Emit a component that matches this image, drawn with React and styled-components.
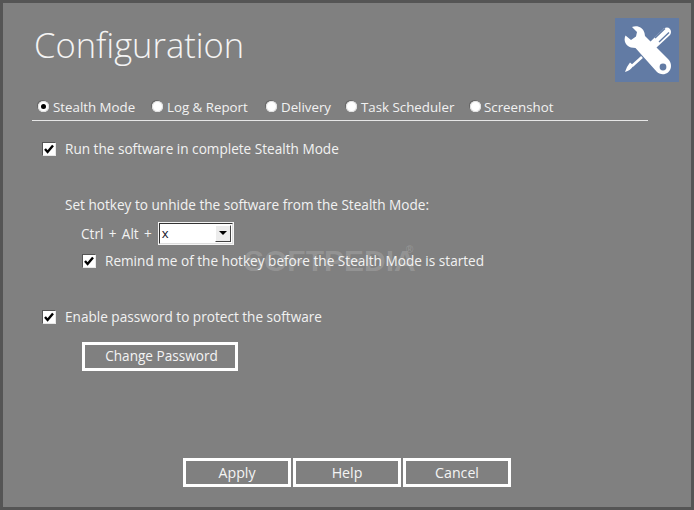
import React from "react";
import styled, { createGlobalStyle } from "styled-components";

const Global = createGlobalStyle`
  html, body { margin: 0; padding: 0; background: #808080; }
  * { box-sizing: border-box; }
`;

const Frame = styled.div`
  position: relative;
  width: 694px;
  height: 510px;
  background: #808080;
  border: 3px solid #555555;
  font-family: "Open Sans", "Noto Sans", sans-serif;
  font-size: 13.6px;
  color: #f2f2f2;
  overflow: hidden;
  display: flex;
  flex-direction: column;
`;

const Header = styled.header`
  display: flex;
  justify-content: space-between;
  align-items: flex-start;
  height: 88px;
  padding: 15px 12px 0 31px;
`;

const Title = styled.h1`
  margin: 3px 0 0;
  font-weight: 300;
  font-size: 34.5px;
  line-height: 48px;
  color: #f4f4f4;
`;

const IconBox = styled.div`
  width: 64px;
  height: 64px;
  background: #627ba4;
  display: flex;
`;

const Tabs = styled.nav`
  display: flex;
  align-items: center;
  height: 30px;
  margin: 0 43px 0 29px;
  padding: 2px 0 0 6px;
  border-bottom: 1px solid #e6e6e6;
  font-size: 13.3px;
`;

const Tab = styled.div`
  display: flex;
  align-items: center;
  width: ${(p) => p.$width}px;
  gap: ${(p) => p.$gap ?? 4}px;
  line-height: 18px;
  white-space: nowrap;
`;

const Radio = styled.span`
  flex: none;
  width: 11px;
  height: 11px;
  border-radius: 50%;
  background: #fff;
  box-shadow: inset 0 0 0 1px #e0e0e0, -1px -1px 0 #666;
  display: flex;
  align-items: center;
  justify-content: center;
  &::after {
    content: "";
    display: ${(p) => (p.$on ? "block" : "none")};
    width: 5px;
    height: 5px;
    border-radius: 50%;
    background: #000;
  }
`;

const Content = styled.main`
  flex: 1;
  display: flex;
  flex-direction: column;
  align-items: flex-start;
  padding: 0 0 0 39px;
`;

const CheckRow = styled.label`
  display: flex;
  align-items: center;
  gap: 10px;
  height: 18px;
  padding-bottom: 2px;
  margin: ${(p) => p.$margin};
  white-space: nowrap;
`;

const CheckBox = styled.span`
  flex: none;
  width: 13px;
  height: 13px;
  margin-top: 1px;
  background: #fff;
  border-top: 1px solid #555;
  border-left: 1px solid #555;
  box-shadow: 1px 1px 0 #e8e8e8;
  display: flex;
  align-items: center;
  justify-content: center;
`;

const Label = styled.div`
  margin: ${(p) => p.$margin};
  line-height: 18px;
  white-space: nowrap;
`;

const HotkeyRow = styled.div`
  display: flex;
  align-items: center;
  gap: 7px;
  height: 22px;
  margin: 8px 0 0 39px;
  word-spacing: 1.8px;
`;

const Select = styled.div`
  width: 74px;
  height: 21px;
  background: #fff;
  border-top: 1px solid #333;
  border-left: 1px solid #333;
  border-right: 1px solid #ddd;
  border-bottom: 1px solid #ddd;
  outline: 1px solid #f4f4f4;
  display: flex;
  align-items: center;
  justify-content: space-between;
  padding: 1px 1px 1px 2px;
  color: #14142a;
  font-family: "Open Sans", sans-serif;
  font-size: 13px;
`;

const SelectArrow = styled.span`
  width: 16px;
  height: 17px;
  background: #ececec;
  border-right: 1px solid #444;
  border-bottom: 1px solid #444;
  border-top: 1px solid #fff;
  border-left: 1px solid #fff;
  display: flex;
  align-items: center;
  justify-content: center;
  &::after {
    content: "";
    border-left: 4px solid transparent;
    border-right: 4px solid transparent;
    border-top: 4px solid #000;
  }
`;

const Button = styled.button`
  width: 108px;
  height: 29px;
  padding: 0;
  background: transparent;
  border: 3px solid #ffffff;
  color: #f4f4f4;
  font: inherit;
  font-size: 14.2px;
`;

const ChangeButton = styled(Button)`
  width: 156px;
  margin: 16px 0 0 40px;
  padding: 0 0 2px 3px;
  font-size: 13.6px;
`;

const Footer = styled.footer`
  display: flex;
  justify-content: center;
  gap: 2px;
  padding: 0 0 20px 0;
`;

const Watermark = styled.div`
  position: absolute;
  left: 241px;
  top: 243px;
  font-family: "Liberation Sans", sans-serif;
  font-weight: 700;
  font-size: 30px;
  line-height: 30px;
  color: rgba(255, 255, 255, 0.17);
  pointer-events: none;
`;

const WatermarkMark = styled.span`
  position: absolute;
  left: 162px;
  top: -2px;
  font-size: 10px;
  line-height: 12px;
`;

const Check = () => (
  <svg width="10" height="10" viewBox="0 0 10 10">
    <path d="M1 5 L3.6 8 L9 1.5" fill="none" stroke="#000" strokeWidth="2.4" />
  </svg>
);

const ToolsIcon = () => (
  <svg width="64" height="64" viewBox="0 0 64 64">
    <path d="M35 24 L49 10.5 Q52.5 8.5 55 11 Q57 14 55 17 L41 30 Z" fill="#fff" />
    <path d="M40 20 L50 10.5 M44 24 L54 14.5" stroke="#627ba4" strokeWidth="1.4" fill="none" />
    <path d="M27 39 L17 48" stroke="#fff" strokeWidth="2.6" fill="none" />
    <path d="M18.5 47.5 L15 44.5 Q12 48 10 54 Q15.5 52.5 18.5 47.5 Z" fill="#fff" />
    <path
      d="M17 9 C22 7 28 9 29.5 15 L30 18 L53 41 C57 45 57 51 53 54.5 C49 57.5 44.5 56.5 41.5 53.5 L20.5 30 L16 29.5 C11 28 8 23 10.5 17.5 L16 22 L21 18.5 L22 14 Z"
      fill="#fff"
    />
    <circle cx="48" cy="49" r="3.4" fill="#627ba4" />
  </svg>
);

export default function App() {
  return (
    <>
      <Global />
      <Frame>
        <Header>
          <Title>Configuration</Title>
          <IconBox><ToolsIcon /></IconBox>
        </Header>
        <Tabs>
          <Tab $width={114}><Radio $on /> Stealth Mode</Tab>
          <Tab $width={114} $gap={4}><Radio /> Log &amp; Report</Tab>
          <Tab $width={80}><Radio /> Delivery</Tab>
          <Tab $width={124}><Radio /> Task Scheduler</Tab>
          <Tab $width={100} $gap={3}><Radio /> Screenshot</Tab>
        </Tabs>
        <Content>
          <CheckRow $margin="19px 0 0 0"><CheckBox><Check /></CheckBox>Run the software in complete Stealth Mode</CheckRow>
          <Label $margin="38px 0 0 23px">Set hotkey to unhide the software from the Stealth Mode:</Label>
          <HotkeyRow>
            Ctrl + Alt +
            <Select>x<SelectArrow /></Select>
          </HotkeyRow>
          <CheckRow $margin="8px 0 0 40px"><CheckBox><Check /></CheckBox>Remind me of the hotkey before the Stealth Mode is started</CheckRow>
          <CheckRow $margin="38px 0 0 0"><CheckBox><Check /></CheckBox>Enable password to protect the software</CheckRow>
          <ChangeButton>Change Password</ChangeButton>
        </Content>
        <Footer>
          <Button>Apply</Button>
          <Button>Help</Button>
          <Button>Cancel</Button>
        </Footer>
        <Watermark>SOFTPEDIA<WatermarkMark>®</WatermarkMark></Watermark>
      </Frame>
    </>
  );
}
